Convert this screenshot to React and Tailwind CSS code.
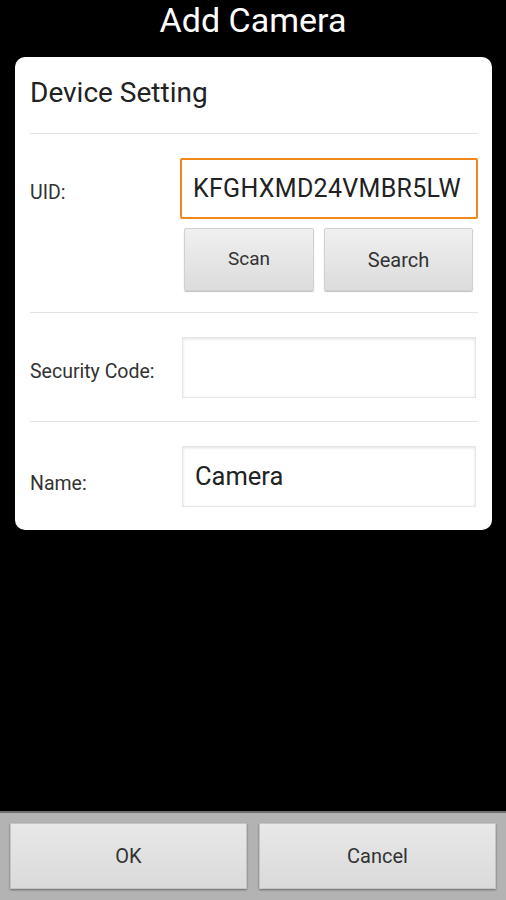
export default function App() {
  const field =
    'h-[61px] bg-white border border-[#e6e6e6] shadow-[inset_0_1px_3px_rgba(0,0,0,0.12)] px-3 flex items-center text-[25.5px] text-[#222]';
  const label = 'text-[19.5px] text-[#333] pt-[9px]';

  return (
    <main
      className="w-[506px] h-[900px] bg-black flex flex-col overflow-hidden"
      style={{ fontFamily: 'Roboto, "Liberation Sans", sans-serif' }}
    >
      <h1 className="h-[40px] text-center text-white text-[34px] leading-[40px]">Add Camera</h1>

      <section className="mt-[17px] ml-[15px] w-[477px] bg-white rounded-[10px] pl-[15px] pr-[14px] pb-[23px]">
        <h2 className="h-[76px] pt-[18px] text-[28px] leading-[36px] text-[#222]">Device Setting</h2>
        <div className="h-px bg-[#e2e2e2]" />

        <div className="pt-[24px] pb-[21px]">
          <div className="flex items-center">
            <label className={`w-[150px] ${label}`}>UID:</label>
            <div className="w-[298px] h-[61px] border-[2px] border-[#f0871a] rounded-[2px] px-[11px] flex items-center text-[25px] text-[#222] tracking-[0.3px]">
              KFGHXMD24VMBR5LW
            </div>
          </div>
          <div className="flex gap-[10px] mt-[9px] ml-[154px]">
            <button className="w-[130px] h-[63px] rounded-[2px] bg-gradient-to-b from-[#f0f0f0] to-[#dcdcdc] border border-[#d0d0d0] shadow-[0_1px_1px_rgba(0,0,0,0.25)] text-[19px] text-[#333]">
              Scan
            </button>
            <button className="w-[149px] h-[63px] rounded-[2px] bg-gradient-to-b from-[#f0f0f0] to-[#dcdcdc] border border-[#d0d0d0] shadow-[0_1px_1px_rgba(0,0,0,0.25)] text-[20px] text-[#333]">
              Search
            </button>
          </div>
        </div>
        <div className="h-px bg-[#e2e2e2]" />

        <div className="flex items-center pt-[24px] pb-[23px]">
          <label className={`w-[152px] ${label}`}>Security Code:</label>
          <div className={`${field} w-[294px]`} />
        </div>
        <div className="h-px bg-[#e2e2e2]" />

        <div className="flex items-center pt-[24px]">
          <label className="w-[152px] text-[19.5px] text-[#333] pt-[14px]">Name:</label>
          <div className={`${field} w-[294px]`}>Camera</div>
        </div>
      </section>

      <footer className="mt-auto h-[89px] bg-[#b3b3b3] border-t-[2px] border-[#6e6e6e] flex gap-[12px] px-[10px] pt-[10px]">
        <button className="w-[237px] h-[66px] bg-gradient-to-b from-[#e8e8e8] to-[#dadada] border border-[#c4c4c4] shadow-[0_1px_2px_rgba(0,0,0,0.4)] text-[20px] text-[#333]">
          OK
        </button>
        <button className="w-[237px] h-[66px] bg-gradient-to-b from-[#e8e8e8] to-[#dadada] border border-[#c4c4c4] shadow-[0_1px_2px_rgba(0,0,0,0.4)] text-[20px] text-[#333]">
          Cancel
        </button>
      </footer>
    </main>
  );
}
